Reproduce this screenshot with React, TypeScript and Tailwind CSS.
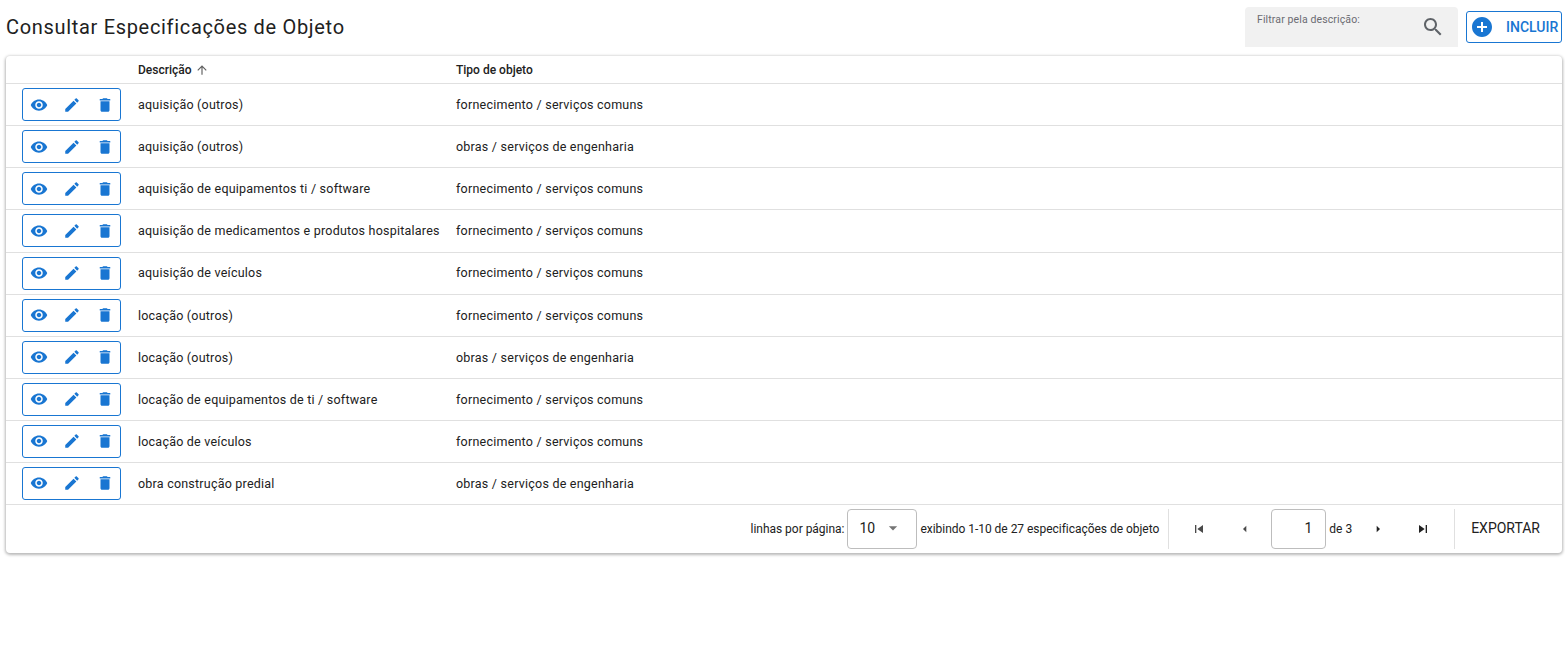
const ROWS = [
  ["aquisição (outros)", "fornecimento / serviços comuns"],
  ["aquisição (outros)", "obras / serviços de engenharia"],
  ["aquisição de equipamentos ti / software", "fornecimento / serviços comuns"],
  ["aquisição de medicamentos e produtos hospitalares", "fornecimento / serviços comuns"],
  ["aquisição de veículos", "fornecimento / serviços comuns"],
  ["locação (outros)", "fornecimento / serviços comuns"],
  ["locação (outros)", "obras / serviços de engenharia"],
  ["locação de equipamentos de ti / software", "fornecimento / serviços comuns"],
  ["locação de veículos", "fornecimento / serviços comuns"],
  ["obra construção predial", "obras / serviços de engenharia"],
];

function Icon({ d, className }: { d: string; className: string }) {
  return (
    <svg viewBox="0 0 24 24" fill="currentColor" className={className}>
      <path d={d} />
    </svg>
  );
}

const EYE = "M12 4.5C7 4.5 2.73 7.61 1 12c1.73 4.39 6 7.5 11 7.5s9.27-3.11 11-7.5c-1.73-4.39-6-7.5-11-7.5zM12 17c-2.76 0-5-2.24-5-5s2.24-5 5-5 5 2.24 5 5-2.24 5-5 5zm0-8c-1.66 0-3 1.34-3 3s1.34 3 3 3 3-1.34 3-3-1.34-3-3-3z";
const EDIT = "M3 17.25V21h3.75L17.81 9.94l-3.75-3.75L3 17.25zM20.71 7.04c.39-.39.39-1.02 0-1.41l-2.34-2.34c-.39-.39-1.02-.39-1.41 0l-1.83 1.83 3.75 3.75 1.83-1.83z";
const TRASH = "M6 19c0 1.1.9 2 2 2h8c1.1 0 2-.9 2-2V7H6v12zM19 4h-3.5l-1-1h-5l-1 1H5v2h14V4z";
const ADD = "M12 2C6.48 2 2 6.48 2 12s4.48 10 10 10 10-4.48 10-10S17.52 2 12 2zm5 11h-4v4h-2v-4H7v-2h4V7h2v4h4v2z";
const SEARCH = "M15.5 14h-.79l-.28-.27C15.41 12.59 16 11.11 16 9.5 16 5.91 13.09 3 9.5 3S3 5.91 3 9.5 5.91 16 9.5 16c1.61 0 3.09-.59 4.23-1.57l.27.28v.79l5 4.99L20.49 19l-4.99-5zm-6 0C7.01 14 5 11.99 5 9.5S7.01 5 9.5 5 14 7.01 14 9.5 11.99 14 9.5 14z";

function Row({ desc, tipo }: { desc: string; tipo: string }) {
  return (
    <div className="flex h-[42.08px] items-center border-b border-[#e0e0e0]">
      <div className="ml-4 flex h-[33px] w-[99px] items-center rounded-[3px] border border-[#1976d2] text-[#1976d2]">
        <Icon d={EYE} className="ml-[7px] h-[18px] w-[18px]" />
        <Icon d={EDIT} className="ml-[15px] h-[18px] w-[18px]" />
        <Icon d={TRASH} className="ml-[15px] h-[18px] w-[18px]" />
      </div>
      <div className="ml-[17px] mt-[1.6px] w-[318px] text-[12.5px] tracking-[0.22px] text-[#212121]">{desc}</div>
      <div className="mt-[1.6px] text-[12.5px] tracking-[0.23px] text-[#212121]">{tipo}</div>
    </div>
  );
}

export default function App() {
  return (
    <div className="min-h-[649px] bg-white pl-[6px] pr-[3px] font-['Roboto',sans-serif]">
      <div className="flex h-[56px] items-center">
        <h1 className="mb-[2px] text-[20px] font-normal tracking-[0.68px] text-[#212121]">Consultar Especificações de Objeto</h1>
        <div className="mb-[2px] ml-auto flex h-[40px] w-[213px] rounded-t-[4px] bg-[#f1f1f1] pl-3 pr-[13px]">
          <span className="mt-[5px] text-[10.5px] tracking-[0.12px] text-[#6b6b72]">Filtrar pela descrição:</span>
          <Icon d={SEARCH} className="ml-auto mt-[8px] h-[24px] w-[24px] text-[#5f6368]" />
        </div>
        <button className="mb-[2px] ml-2 flex h-[32px] w-[96px] items-center rounded-[3px] border border-[#1976d2] text-[14px] font-medium text-[#1976d2]">
          <Icon d={ADD} className="ml-[3px] h-[24px] w-[24px]" />
          <span className="ml-[12px]">INCLUIR</span>
        </button>
      </div>

      <div className="w-[1556px] rounded-[4px] bg-white shadow-[0_1px_3px_1px_rgba(0,0,0,0.28)]">
        <div className="flex h-[28.2px] items-center border-b border-[#e0e0e0] text-[12px] font-medium text-[#212121]">
          <div className="ml-[132px] flex w-[318px] items-center">
            <span>Descrição</span>
            <Icon d="M4 12l1.41 1.41L11 7.83V20h2V7.83l5.58 5.59L20 12l-8-8-8 8z" className="ml-[3px] h-[14px] w-[14px] text-[#616161]" />
          </div>
          <span>Tipo de objeto</span>
        </div>
        {ROWS.map((r, i) => (
          <Row key={i} desc={r[0]} tipo={r[1]} />
        ))}
        <div className="flex h-[48px] items-center justify-end text-[12px] text-[#212121]">
          <span className="tracking-[-0.03px]">linhas por página:</span>
          <div className="ml-[3px] flex h-[40px] w-[70px] items-center rounded-[4px] border border-[#bdbdbd] pb-[1px] pl-[11px] text-[14px]">
            10
            <Icon d="M7 10l5 5 5-5z" className="ml-[8px] h-5 w-5 text-[#757575]" />
          </div>
          <span className="ml-[3px] tracking-[-0.03px]">exibindo 1-10 de 27 especificações de objeto</span>
          <div className="ml-[9px] flex h-[40px] items-center border-l border-[#e0e0e0]">
            <Icon d="M6 6h2v12H6zm3.5 6l8.5 6V6z" className="ml-[22px] h-4 w-4 text-[#4a4a4a]" />
            <Icon d="M14 7l-5 5 5 5V7z" className="ml-[30px] h-4 w-4 text-[#4a4a4a]" />
            <div className="ml-[18px] flex h-[40px] w-[55px] items-center justify-end rounded-[4px] border border-[#bdbdbd] pb-[1px] pr-[13px] text-[14px]">1</div>
            <span className="ml-[3px]">de 3</span>
            <Icon d="M10 17l5-5-5-5v10z" className="ml-[18px] h-4 w-4 text-[#212121]" />
            <Icon d="M6 18l8.5-6L6 6v12zM16 6v12h2V6h-2z" className="ml-[29px] h-4 w-4 text-[#212121]" />
            <div className="ml-[23px] flex h-[40px] items-center border-l border-[#e0e0e0] pb-[1px] pl-[16px] pr-[22px] text-[14px]">EXPORTAR</div>
          </div>
        </div>
      </div>
    </div>
  );
}
